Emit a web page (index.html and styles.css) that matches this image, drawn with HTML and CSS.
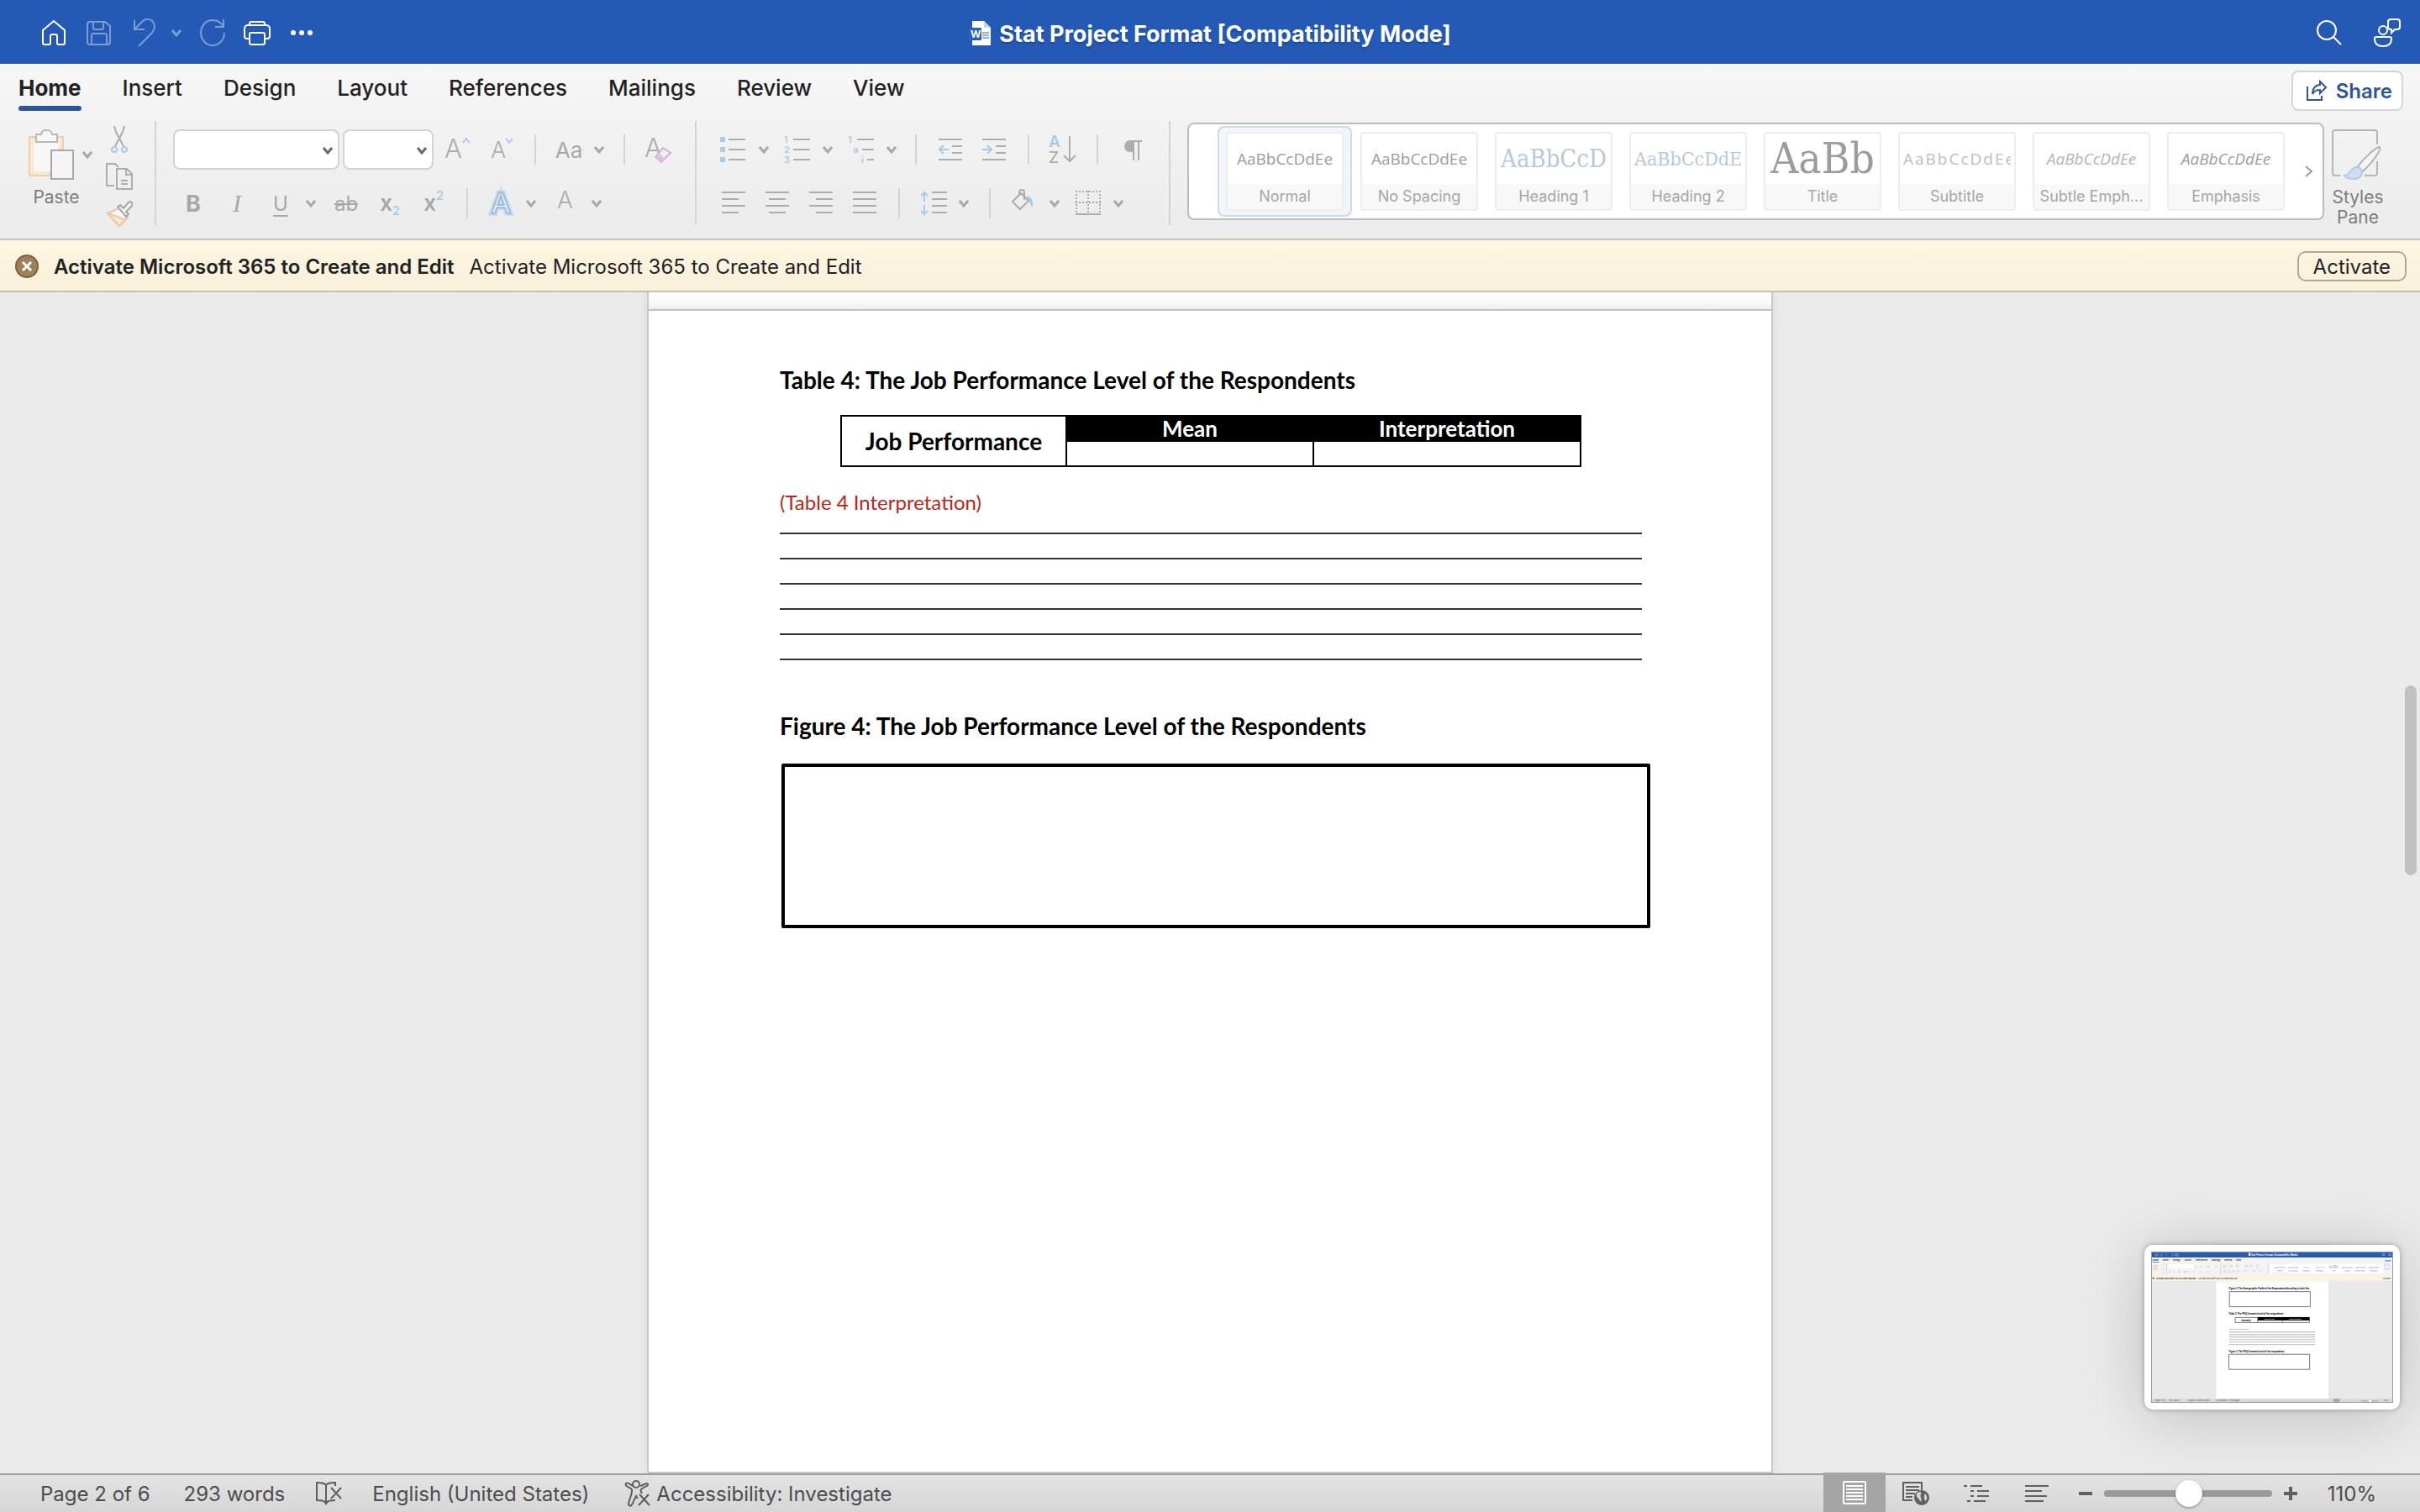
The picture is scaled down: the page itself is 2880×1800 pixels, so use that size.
FILE: index.html
```html
<!DOCTYPE html>
<html lang="en">
  <head>
    <meta charset="UTF-8" />
    <meta name="viewport" content="width=device-width, initial-scale=1.0" />
    <title>Stat Project Format</title>
    <link rel="stylesheet" href="styles.css">
  </head>
  <body>
    <!-- shared icons -->
    <svg class="defs" width="0" height="0" aria-hidden="true">
      <symbol id="chev" viewBox="0 0 12 10"><path d="M1 2l5 6 5-6" fill="none" stroke="currentColor" stroke-width="3"/></symbol>
    </svg>

    <header class="titlebar">
      <div class="quick">
        <button aria-label="Home"><svg width="32" height="32" viewBox="0 0 32 32"><path d="M3 13L16 2l13 11v15a2 2 0 0 1-2 2h-5a2 2 0 0 1-2-2v-8a2 2 0 0 0-2-2h-4a2 2 0 0 0-2 2v8a2 2 0 0 1-2 2H5a2 2 0 0 1-2-2z"/></svg></button>
        <button class="dim" aria-label="Save"><svg width="32" height="32" viewBox="0 0 32 32"><path d="M5 3h18l6 5v19a3 3 0 0 1-3 3H5a3 3 0 0 1-3-3V6a3 3 0 0 1 3-3zM9 3v7a2 2 0 0 0 2 2h8a2 2 0 0 0 2-2V3M7 30V19a2 2 0 0 1 2-2h14a2 2 0 0 1 2 2v11"/></svg></button>
        <button class="dim" aria-label="Undo"><svg width="32" height="34" viewBox="0 0 32 34"><path d="M4 2v11h12M4 13L14 3c5-4 10-2 12 1 3 4 2 9-1 13L9 33"/></svg></button>
        <button class="dim small" aria-label="Undo options"><svg width="12" height="10"><use href="#chev"/></svg></button>
        <button class="dim" aria-label="Redo"><svg width="32" height="34" viewBox="0 0 32 34"><path d="M30 1v9H20M30 10C27 4 22 2 16 2a14 15 0 1 0 15 15"/></svg></button>
        <button aria-label="Print"><svg width="32" height="32" viewBox="1 0 32 32"><path d="M8 7V5a2 2 0 0 1 2-2h14a2 2 0 0 1 2 2v2M8 23H5a3 3 0 0 1-3-3v-9a4 4 0 0 1 4-4h22a4 4 0 0 1 4 4v9a3 3 0 0 1-3 3h-3M8 18a2 2 0 0 1 2-2h14a2 2 0 0 1 2 2v10a2 2 0 0 1-2 2H10a2 2 0 0 1-2-2z"/></svg></button>
        <button aria-label="More"><svg width="30" height="8" viewBox="0 0 30 8"><g class="fill"><circle cx="5" cy="4" r="3"/><circle cx="15" cy="4" r="3"/><circle cx="25" cy="4" r="3"/></g></svg></button>
      </div>
      <h1 class="filename">
        <svg width="26" height="30" viewBox="0 0 26 30"><path class="sheet" d="M4 0h14l8 8v21H4z"/><path d="M18 0v8h8z" fill="#c9d6ea"/><path d="M16 14h8M16 17h8M16 20h8" stroke="#2b62b8" stroke-width="1"/><rect y="8" width="15" height="15" rx="1" fill="#2a63bd"/><text x="2" y="20" font-size="12" font-weight="700" fill="#fff">W</text></svg>
        Stat Project Format [Compatibility Mode]
      </h1>
      <div class="quick-right">
        <button aria-label="Search"><svg width="32" height="32" viewBox="0 0 32 32"><circle cx="13" cy="13" r="11"/><path d="M21 21l9 9"/></svg></button>
        <button aria-label="Comments"><svg width="34" height="34" viewBox="0 0 34 34"><circle cx="12" cy="14" r="5"/><path d="M4 22h16a2 2 0 0 1 2 2c0 6-4 9-10 9S2 30 2 24a2 2 0 0 1 2-2zM21 1h8a3 3 0 0 1 3 3v6a3 3 0 0 1-3 3h-3l-4 4v-4h-1a3 3 0 0 1-3-3V4a3 3 0 0 1 3-3z"/></svg></button>
      </div>
    </header>

    <div class="ribbon">
      <div class="tab-row">
        <nav class="tabs">
          <a class="on" href="#">Home</a>
          <a href="#">Insert</a>
          <a href="#">Design</a>
          <a href="#">Layout</a>
          <a href="#">References</a>
          <a href="#">Mailings</a>
          <a href="#">Review</a>
          <a href="#">View</a>
        </nav>
        <button class="share"><svg width="26" height="26" viewBox="0 0 26 26"><path d="M2 8v16h17v-5M8 17c0-7 4-11 9-11V2l7 7-7 7v-4c-4 0-7 1-9 5z" fill="none" stroke="currentColor" stroke-width="2"/></svg>Share</button>
      </div>

      <div class="tools">
        <section class="clipboard">
          <div class="paste">
            <div class="paste-top">
              <button aria-label="Paste"><svg width="56" height="60" viewBox="0 0 56 60"><path d="M1 9h40v15H26v31H1z" fill="#f7ead0" stroke="#f0cdb0" stroke-width="2"/><path d="M6 14h30v12H26v24H6z" fill="#f7f7f7"/><path d="M9 6h6c0-7 13-7 13 0h6v9H9z" fill="#f7f7f7" stroke="#b9b9b9" stroke-width="2"/><path d="M27 25h26v34H27z" fill="#f5f5f5" stroke="#a9a9a9" stroke-width="2"/></svg></button>
              <button class="drop" aria-label="Paste options"><svg width="12" height="10"><use href="#chev"/></svg></button>
            </div>
            <span class="caption">Paste</span>
          </div>
          <div class="clip-col">
            <button aria-label="Cut"><svg width="32" height="32" viewBox="0 0 32 32" fill="none"><path d="M10 0l2 7 9 17M22 0l-2 7-9 17" stroke="#adadad" stroke-width="2"/><g stroke="#a9cbe5" stroke-width="2"><circle cx="10" cy="28" r="3"/><circle cx="22" cy="28" r="3"/></g></svg></button>
            <button aria-label="Copy"><svg width="32" height="32" viewBox="0 0 32 32" fill="none" stroke="#adadad" stroke-width="2"><path d="M10 27H1V1h10l4 4"/><path d="M13 7h12l6 6v18H13zM24 7v7h7M18 21h8M18 25h8"/></svg></button>
            <button aria-label="Format painter"><svg width="32" height="32" viewBox="0 0 32 32" fill="none" stroke-width="2"><path d="M2 16l13-6 11 11-10 10z" fill="#f7f7f7" stroke="#f0c5a4"/><path d="M2 16c8 2 15 5 21 8l-7 7z" fill="#f7ead0" stroke="#f0c5a4"/><path d="M14 8l3-2 4 4 6-7c2-2 6 1 4 4l-7 7 3 3-3 3z" fill="#f5f5f5" stroke="#a5a5a5"/></svg></button>
          </div>
        </section>

        <section class="font-group">
          <div class="row">
            <div class="boxes">
              <span class="pick wide"><select aria-label="Font name"><option></option></select><svg width="12" height="10"><use href="#chev"/></svg></span>
              <span class="pick"><select aria-label="Font size"><option></option></select><svg width="12" height="10"><use href="#chev"/></svg></span>
            </div>
            <button class="tool" aria-label="Grow font"><svg width="32" height="32" viewBox="0 0 32 32"><text x="0" y="26" font-size="31">A</text><path class="blue-line" d="M22 8l4-5 4 5"/></svg></button>
            <button class="tool" aria-label="Shrink font"><svg width="32" height="32" viewBox="0 0 32 32"><text x="3" y="26" font-size="27">A</text><path class="blue-line" d="M21 3l4 5 4-5"/></svg></button>
            <i class="bar"></i>
            <span class="split"><button class="tool case">Aa</button><button class="drop" aria-label="Case options"><svg width="12" height="10"><use href="#chev"/></svg></button></span>
            <i class="bar"></i>
            <button class="tool" aria-label="Clear formatting"><svg width="32" height="34" viewBox="0 0 32 34"><text x="0" y="26" font-size="31">A</text><path d="M22 15l9 6-11 11-7-6z" fill="#f3eef5" stroke="#cfaed6" stroke-width="2"/><path d="M17 21l7 7-4 4-7-6z" fill="#dcc3e2"/></svg></button>
          </div>
          <div class="row second">
            <button class="tool bold">B</button>
            <button class="tool italic">I</button>
            <span class="split"><button class="tool under">U</button><button class="drop" aria-label="Underline options"><svg width="12" height="10"><use href="#chev"/></svg></button></span>
            <button class="tool strike">ab</button>
            <button class="tool script">x<sub>2</sub></button>
            <button class="tool script">x<sup>2</sup></button>
            <i class="bar"></i>
            <span class="split"><button class="tool" aria-label="Text effects"><svg width="32" height="32" viewBox="0 0 32 32"><text x="4" y="28" font-size="34" class="halo">A</text><text x="4" y="28" font-size="34" class="glow">A</text></svg></button><button class="drop" aria-label="Effect options"><svg width="12" height="10"><use href="#chev"/></svg></button></span>
            <span class="split"><button class="tool" aria-label="Font color"><svg width="32" height="32" viewBox="0 0 32 32"><text x="5" y="22" font-size="28">A</text></svg></button><button class="drop" aria-label="Color options"><svg width="12" height="10"><use href="#chev"/></svg></button></span>
          </div>
        </section>

        <section class="para-group">
          <div class="row">
            <div class="lists">
              <span class="split"><button class="tool" aria-label="Bullets"><svg width="32" height="32" viewBox="0 0 32 32"><path class="blue" d="M0 1h6v6H0zM0 13h6v6H0zM0 25h6v6H0z"/><path class="line" d="M10 4h20M10 16h20M10 28h20"/></svg></button><button class="drop" aria-label="Bullet options"><svg width="12" height="10"><use href="#chev"/></svg></button></span>
              <span class="split"><button class="tool" aria-label="Numbering"><svg width="32" height="32" viewBox="0 0 32 32"><g class="blue" font-size="11"><text x="0" y="8">1</text><text x="0" y="20">2</text><text x="0" y="32">3</text></g><path class="line" d="M11 4h20M11 16h20M11 28h20"/></svg></button><button class="drop" aria-label="Numbering options"><svg width="12" height="10"><use href="#chev"/></svg></button></span>
              <span class="split"><button class="tool" aria-label="Multilevel list"><svg width="32" height="32" viewBox="0 0 32 32"><g class="blue" font-size="11"><text x="0" y="8">1</text><text x="6" y="20">a</text><text x="16" y="32">i</text></g><path class="line" d="M11 4h20M17 16h14M23 28h8"/></svg></button><button class="drop" aria-label="Multilevel options"><svg width="12" height="10"><use href="#chev"/></svg></button></span>
            </div>
            <i class="bar"></i>
            <button class="tool" aria-label="Decrease indent"><svg width="32" height="32" viewBox="0 0 32 32"><path class="line" d="M2 4h28M18 12h12M18 20h12M2 28h28"/><path class="blue-line" d="M14 16H3M8 11l-5 5 5 5"/></svg></button>
            <button class="tool" aria-label="Increase indent"><svg width="32" height="32" viewBox="0 0 32 32"><path class="line" d="M2 4h28M18 12h12M18 20h12M2 28h28"/><path class="blue-line" d="M2 16h11M8 11l5 5-5 5"/></svg></button>
            <i class="bar"></i>
            <button class="tool" aria-label="Sort"><svg width="34" height="34" viewBox="0 0 34 34"><text class="blue" x="0" y="14" font-size="19">A</text><text class="zed" x="0" y="33" font-size="19">Z</text><path class="line" d="M25 1v30M18 24l7 7 7-7"/></svg></button>
            <i class="bar"></i>
            <button class="tool" aria-label="Show marks"><svg width="32" height="32" viewBox="0 0 32 32"><path d="M14 5h14v2h-3v22h-2V7h-4v22h-2V19h-3c-9 0-9-14 0-14z" fill="#adadad"/></svg></button>
          </div>
          <div class="row">
            <button class="tool" aria-label="Align left"><svg width="32" height="32" viewBox="0 0 32 32"><path class="line" d="M2 3h28M2 11h20M2 19h28M2 27h20"/></svg></button>
            <button class="tool" aria-label="Center"><svg width="32" height="32" viewBox="0 0 32 32"><path class="line" d="M2 3h28M6 11h20M2 19h28M6 27h20"/></svg></button>
            <button class="tool" aria-label="Align right"><svg width="32" height="32" viewBox="0 0 32 32"><path class="line" d="M2 3h28M10 11h20M2 19h28M10 27h20"/></svg></button>
            <button class="tool" aria-label="Justify"><svg width="32" height="32" viewBox="0 0 32 32"><path class="line" d="M2 3h28M2 11h28M2 19h28M2 27h28"/></svg></button>
            <i class="bar"></i>
            <span class="split"><button class="tool" aria-label="Line spacing"><svg width="32" height="32" viewBox="0 0 32 32"><path class="blue-line" d="M5 14V3M1 7l4-4 4 4M5 18v11M1 25l4 4 4-4"/><path class="line" d="M14 3h18M14 11h18M14 19h18M14 27h18"/></svg></button><button class="drop" aria-label="Spacing options"><svg width="12" height="10"><use href="#chev"/></svg></button></span>
            <i class="bar"></i>
            <div class="lists">
              <span class="split"><button class="tool" aria-label="Shading"><svg width="32" height="32" viewBox="0 0 32 32"><path class="line" d="M2 14L12 4l9 9-10 10zM10 6V3c0-4 6-4 6 0v9"/><path class="blue" d="M18 8c6-1 9 4 8 13-3-3-3-7-8-13z"/></svg></button><button class="drop" aria-label="Shading options"><svg width="12" height="10"><use href="#chev"/></svg></button></span>
              <span class="split"><button class="tool" aria-label="Borders"><svg width="32" height="32" viewBox="0 0 32 32"><path class="line dots" d="M1 2h30M1 15h30M2 1v26M16 1v26M30 1v26"/><path class="line" d="M1 29h30"/></svg></button><button class="drop" aria-label="Border options"><svg width="12" height="10"><use href="#chev"/></svg></button></span>
            </div>
          </div>
        </section>

        <section class="gallery">
          <button class="style on"><span class="card"><span class="sample">AaBbCcDdEe</span><span class="name">Normal</span></span></button>
          <button class="style"><span class="card"><span class="sample">AaBbCcDdEe</span><span class="name">No Spacing</span></span></button>
          <button class="style"><span class="card"><span class="sample h1">AaBbCcD</span><span class="name">Heading 1</span></span></button>
          <button class="style"><span class="card"><span class="sample h2">AaBbCcDdE</span><span class="name">Heading 2</span></span></button>
          <button class="style"><span class="card"><span class="sample title">AaBb</span><span class="name">Title</span></span></button>
          <button class="style"><span class="card"><span class="sample subtitle">AaBbCcDdEe</span><span class="name">Subtitle</span></span></button>
          <button class="style"><span class="card"><span class="sample subtle">AaBbCcDdEe</span><span class="name">Subtle Emph...</span></span></button>
          <button class="style"><span class="card"><span class="sample em">AaBbCcDdEe</span><span class="name">Emphasis</span></span></button>
          <button class="more" aria-label="More styles"><svg width="12" height="14" viewBox="0 0 12 14"><path d="M2 1l7 6-7 6" fill="none" stroke="#9c9c9c" stroke-width="2"/></svg></button>
        </section>

        <button class="styles-pane">
          <svg width="64" height="62" viewBox="0 0 64 62"><path d="M11 55H5a3 3 0 0 1-3-3V4a3 3 0 0 1 3-3h47a3 3 0 0 1 3 3v14M55 38v14a3 3 0 0 1-3 3H40" fill="none" stroke="#b5b5b5" stroke-width="2"/><path d="M32 44C40 34 52 22 58 21c3 3-10 20-20 29z" fill="#f5f5f5" stroke="#b0b0b0" stroke-width="2"/><path d="M16 55c7 0 7-10 15-10 9 1 8 14-4 14-5 0-9-1-11-4z" fill="#cfdfee" stroke="#b0cbe4" stroke-width="2"/></svg>
          <span class="caption">Styles<br>Pane</span>
        </button>
      </div>
    </div>

    <div class="message">
      <button class="close" aria-label="Close"><svg width="28" height="28" viewBox="0 0 28 28"><circle cx="14" cy="14" r="13" fill="#a08059" stroke="#7c6344" stroke-width="2"/><path d="M9 9l10 10M19 9L9 19" stroke="#fff" stroke-width="3"/></svg></button>
      <strong>Activate Microsoft 365 to Create and Edit</strong>
      <span>Activate Microsoft 365 to Create and Edit</span>
      <button class="activate">Activate</button>
    </div>

    <main class="workspace">
      <div class="page-end"></div>
      <article class="page">
        <h2>Table 4: The Job Performance Level of the Respondents</h2>
        <table class="result">
          <tr>
            <th class="label" rowspan="2">Job Performance</th>
            <th class="head mean">Mean</th>
            <th class="head">Interpretation</th>
          </tr>
          <tr>
            <td></td>
            <td></td>
          </tr>
        </table>
        <p class="note">(Table 4 Interpretation)</p>
        <div class="blanks">
          <hr><hr><hr><hr><hr><hr>
        </div>
        <h2>Figure 4: The Job Performance Level of the Respondents</h2>
        <div class="figure"></div>
      </article>

      <div class="scroll"></div>

      <!-- floating preview of the first page -->
      <div class="preview">
        <svg viewBox="0 0 2880 1800">
          <rect width="2880" height="1800" fill="#e9e9e9"/>
          <rect width="2880" height="70" fill="#245ab5"/>
          <text x="1190" y="48" font-size="28" font-weight="700" fill="#fff">Stat Project Format [Compatibility Mode]</text>
          <path d="M1160 15h22v36h-22z" fill="#fff"/>
          <path d="M50 50V34l13-12 13 12v16zM290 26h32v24h-32zM2756 24h22v22h-22zM2830 24h22v22h-22z" fill="none" stroke="#c8d8f0" stroke-width="5"/>
          <path d="M104 26h26v24h-26zM160 30h26v20M236 26h28v24h-28" fill="none" stroke="#7c9fd6" stroke-width="5"/>
          <rect y="70" width="2880" height="220" fill="#f3f3f3"/>
          <g font-size="26" font-weight="600" fill="#222"><text x="16" y="112">Home</text><text x="138" y="112">Insert</text><text x="260" y="112">Design</text><text x="396" y="112">Layout</text><text x="530" y="112">References</text><text x="720" y="112">Mailings</text><text x="872" y="112">Review</text><text x="1008" y="112">View</text><text x="2780" y="118" fill="#2f5596">Share</text></g>
          <rect x="20" y="122" width="74" height="7" fill="#2f5596"/>
          <path d="M206 150h190v50H206zM408 150h106v50H408zM1414 144h1350v116H1414z" fill="#fff"/>
          <path d="M30 160h44v56H30z" fill="#f3e4cd" stroke="#c9c9c9" stroke-width="5"/>
          <g fill="none" stroke="#bdbdbd" stroke-width="5"><path d="M858 164h34M858 178h34M858 190h34M934 164h34M934 178h34M1010 164h34M1010 178h34M1118 164h34M1118 178h34M1170 164h34M1170 178h34M1250 164h30M1250 190h30M860 228h30M860 242h30M912 228h30M912 242h30M964 228h30M964 242h30M1016 228h30M1016 242h30M1098 228h40M1204 228h40M1278 228h40M130 150h26M130 204h26M130 246h26"/><path d="M185 140v130M828 140v130M1392 140v130"/></g>
          <g font-size="26" fill="#a5a5a5"><text x="524" y="188">A</text><text x="580" y="188">A</text><text x="660" y="188">Aa</text><text x="768" y="188">A</text><text x="216" y="250">B</text><text x="272" y="250">I</text><text x="320" y="250">U</text><text x="394" y="250">ab</text><text x="450" y="250">x</text><text x="504" y="250">x</text><text x="580" y="250" fill="#7fa9dc">A</text><text x="664" y="250">A</text></g>
          <g font-size="20" fill="#a0a0a0" text-anchor="middle"><rect x="1452" y="150" width="152" height="104" fill="none" stroke="#d3dfee" stroke-width="4"/><text x="1530" y="196">AaBbCcDdEe</text><text x="1690" y="196">AaBbCcDdEe</text><text x="1850" y="196" fill="#b9c7dd">AaBbCcD</text><text x="2010" y="196" fill="#b9c7dd">AaBbCcDdE</text><text x="2170" y="202" font-size="44">AaBb</text><text x="2330" y="196">AaBbCcDdEe</text><text x="2490" y="196">AaBbCcDdEe</text><text x="2650" y="196">AaBbCcDdEe</text><text x="1530" y="240">Normal</text><text x="1690" y="240">No Spacing</text><text x="1850" y="240">Heading 1</text><text x="2010" y="240">Heading 2</text><text x="2170" y="240">Title</text><text x="2330" y="240">Subtitle</text><text x="2490" y="240">Subtle Emph...</text><text x="2650" y="240">Emphasis</text></g>
          <path d="M2780 154h54v54h-54z" fill="#eef3f8" stroke="#bdbdbd" stroke-width="5"/>
          <rect y="290" width="2880" height="54" fill="#fcf3de"/>
          <circle cx="28" cy="317" r="14" fill="#a08059"/>
          <g font-size="24" fill="#222"><text x="60" y="326" font-weight="600">Activate Microsoft 365 to Create and Edit</text><text x="560" y="326">Activate Microsoft 365 to Create and Edit</text><text x="2756" y="326">Activate</text></g>
          <rect x="773" y="346" width="1337" height="1410" fill="#fff"/>
          <path d="M773 360h1337" stroke="#d8d8d8" stroke-width="5"/>
          <g class="mini-doc" font-size="28" font-weight="900"><text x="926" y="454">Figure 2. The Demographic Profile of the Respondents According to their Sex</text><text x="926" y="752">Table 3. The PSQI Insomnia level of the respondents.</text><text x="926" y="1198">Figure 3. The PSQI Insomnia level of the respondents.</text><text x="1074" y="828">Insomnia</text><text x="926" y="934" font-size="24" font-weight="400" fill="#d8453c">(Table 3 Interpretation)</text></g>
          <path d="M932 476h962v180H932zM926 1222h960v180H926zM1000 784h884v60h-884z" fill="none" stroke="#444" stroke-width="7"/>
          <path d="M1266 780h618v40h-618z"/><path d="M1266 820v24M1562 820v24" stroke="#444" stroke-width="6"/>
          <g class="mini-doc" font-size="24" font-weight="700" fill="#fff"><text x="1346" y="812">Mean Score</text><text x="1640" y="812">Interpretation</text></g>
          <path d="M926 958h1026M926 988h1026M926 1018h1026M926 1046h1026M926 1076h1026M926 1106h1026" stroke="#c8c8c8" stroke-width="14"/>
          <rect y="1752" width="2880" height="48" fill="#d8d8d8"/>
          <rect x="2170" y="1752" width="74" height="48" fill="#a5a5a5"/>
          <g font-size="24" fill="#555"><text x="46" y="1784">Page 1 of 6</text><text x="214" y="1784">293 words</text><text x="440" y="1784">English (United States)</text><text x="776" y="1784">Accessibility: Investigate</text><text x="2768" y="1784">110%</text></g>
          <path d="M2500 1778h206" stroke="#999" stroke-width="8"/><circle cx="2606" cy="1778" r="16" fill="#fff"/>
        </svg>
      </div>
    </main>

    <footer class="status">
      <span class="pages">Page 2 of 6</span>
      <span class="words">293 words</span>
      <button class="proof" aria-label="Proofing"><svg width="32" height="30" viewBox="0 0 32 30"><path d="M13 5c-2-3-6-3-11-3v21c5 0 9 0 11 4 2-4 6-4 11-4M13 5c2-3 6-3 11-3v4M13 5v21M19 8l12 13M31 8L19 21" fill="none" stroke="#5e5e5e" stroke-width="2"/></svg></button>
      <span class="lang">English (United States)</span>
      <button class="access"><svg width="32" height="32" viewBox="0 0 32 32"><path d="M9 11C5 8 0 7 2 4c2-2 5 2 9 3M19 7c4-1 8-5 9-2 1 2-5 3-8 6-1 2 0 3 1 5M9 11c1 5-4 13-4 18 2 4 5 0 6-4l3-6 2 3M18 17l12 13M29 17L17 30" fill="none" stroke="#5e5e5e" stroke-width="2"/><circle cx="14" cy="5" r="4" fill="none" stroke="#5e5e5e" stroke-width="2"/></svg>Accessibility: Investigate</button>
      <div class="views">
        <button class="view on" aria-label="Print layout"><svg width="28" height="28" viewBox="0 0 28 28"><rect x="1" y="1" width="26" height="26" rx="1" fill="none" stroke="#fff" stroke-width="2"/><path d="M4 6h20M4 10h20M4 14h20M4 18h20M4 22h20" stroke="#fff" stroke-width="2"/></svg></button>
        <button class="view" aria-label="Web layout"><svg width="32" height="28" viewBox="0 0 32 28"><path d="M12 22H1V1h22v9M4 6h16M4 10h16M4 14h11M4 18h8" fill="none" stroke="#606060" stroke-width="2"/><circle cx="23" cy="19" r="9" fill="#606060"/><path d="M17 14c3-3 7-2 5 1-2 2 2 4 0 9-2-2-2-4-5-6zM27 14c3 3 3 7 0 9-1-3-2-6 0-9z" fill="#d4d4d4"/></svg></button>
        <button class="view" aria-label="Outline"><svg width="32" height="24" viewBox="0 0 32 24"><path d="M1 3h4M9 3h14M9 9h4M17 9h14M9 15h4M17 15h14M5 21h4M13 21h14" stroke="#606060" stroke-width="2"/></svg></button>
        <button class="view" aria-label="Draft"><svg width="30" height="24" viewBox="0 0 30 24"><path d="M1 3h28M1 9h20M1 15h26M1 21h22" stroke="#606060" stroke-width="2"/></svg></button>
      </div>
      <div class="zoom">
        <button aria-label="Zoom out"><svg width="16" height="16" viewBox="0 0 16 16"><path d="M0 8h16" stroke="#606060" stroke-width="4"/></svg></button>
        <input type="range" min="0" max="100" value="51" aria-label="Zoom">
        <button aria-label="Zoom in"><svg width="16" height="16" viewBox="0 0 16 16"><path d="M0 8h16M8 0v16" stroke="#606060" stroke-width="4"/></svg></button>
        <button class="percent">110%</button>
      </div>
    </footer>
  </body>
</html>
```
FILE: styles.css
```css
* {
  margin: 0;
  padding: 0;
  box-sizing: border-box;
}
body {
  height: 100vh;
  display: flex;
  flex-direction: column;
  overflow: hidden;
  background: #ebebeb;
  font-family: Inter, "Liberation Sans", sans-serif;
  font-size: 24px;
  color: #222;
}
button {
  display: flex;
  align-items: center;
  justify-content: center;
  background: none;
  border: none;
  color: inherit;
  font: inherit;
}
svg {
  display: block;
  flex: none;
}
.defs {
  position: absolute;
}

/* title bar */
.titlebar {
  height: 76px;
  padding: 2px 22px 0;
  display: grid;
  grid-template-columns: 1fr auto 1fr;
  align-items: center;
  background: #245ab5;
  color: #fff;
}
.quick,
.quick-right {
  display: flex;
  align-items: center;
  gap: 22px;
}
.quick {
  padding-left: 26px;
}
.quick-right {
  justify-content: flex-end;
  gap: 36px;
}
.quick svg path,
.quick-right svg path,
.quick-right circle {
  fill: none;
  stroke: currentColor;
  stroke-width: 2;
}
.quick .fill {
  fill: #fff;
}
.dim {
  color: #7b9dd4;
}
.quick .small {
  margin: 0 -2px 0 -6px;
}
.filename {
  display: flex;
  align-items: center;
  gap: 10px;
  padding-top: 2px;
  font-size: 27px;
  font-weight: 700;
  text-shadow: 0 2px 2px rgba(0, 0, 0, 0.2);
}
.filename .sheet {
  fill: #fff;
}

/* ribbon */
.ribbon {
  height: 210px;
  background: linear-gradient(#f7f7f7, #f3f3f3 30%, #ebebeb);
  border-bottom: 2px solid #c4c4c4;
}
.tab-row {
  height: 68px;
  padding: 8px 20px 0 22px;
  display: flex;
  justify-content: space-between;
  align-items: flex-start;
}
.tabs {
  display: flex;
  gap: 49px;
}
.tabs a {
  color: #222;
  font-size: 26px;
  font-weight: 500;
  line-height: 42px;
  text-decoration: none;
}
.tabs .on {
  font-weight: 700;
}
.tabs .on::after {
  content: "";
  display: block;
  height: 6px;
  border-radius: 3px;
  background: #2f5596;
}
.share {
  height: 48px;
  padding: 0 11px 0 15px;
  gap: 10px;
  border: 2px solid #d6d6d6;
  border-radius: 8px;
  background: #fff;
  color: #2f5596;
  font-weight: 600;
}
.tools {
  display: flex;
  align-items: flex-start;
  padding-left: 34px;
  color: #a8a8a8;
}
.clipboard,
.font-group,
.para-group {
  height: 124px;
  border-right: 2px solid #d4d4d4;
}
.clipboard {
  display: flex;
  gap: 16px;
  padding-right: 26px;
}
.paste {
  padding-top: 10px;
}
.paste-top {
  display: flex;
  align-items: center;
  gap: 8px;
}
.caption {
  display: block;
  color: #7d7d7d;
  font-size: 21px;
  line-height: 24px;
  text-align: center;
}
.paste .caption {
  width: 66px;
  margin-top: 9px;
}
.clip-col {
  display: flex;
  flex-direction: column;
  gap: 12px;
  padding-top: 6px;
}
.font-group {
  padding: 10px 28px 0 20px;
}
.para-group {
  padding: 10px 28px 0;
}
.row {
  height: 48px;
  margin-bottom: 16px;
  display: flex;
  align-items: center;
  gap: 20px;
}
.row.second {
  padding-left: 8px;
}
.boxes {
  display: flex;
  gap: 4px;
  margin-right: -7px;
}
.pick {
  position: relative;
  width: 108px;
  height: 48px;
  color: #6b6b6b;
}
.pick.wide {
  width: 198px;
}
.pick select {
  width: 100%;
  height: 100%;
  appearance: none;
  border: 2px solid #d3d3d3;
  border-radius: 8px;
  background: #fff;
}
.pick svg {
  position: absolute;
  right: 8px;
  top: 20px;
}
.tool {
  width: 32px;
  height: 32px;
}
.tool svg {
  overflow: visible;
}
.tool text {
  fill: #adadad;
  font-weight: 300;
}
.tool .zed {
  font-weight: 500;
}
.tool .blue,
.tool .blue text {
  fill: #a9cbe5;
  font-weight: 600;
}
.line,
.blue-line {
  fill: none;
  stroke: #adadad;
  stroke-width: 2;
}
.blue-line {
  stroke: #a9cbe5;
}
.dots {
  stroke-dasharray: 2 2;
}
.tool .halo {
  fill: none;
  font-weight: 500;
  stroke: #c9dcee;
  stroke-width: 6;
}
.tool .glow {
  fill: #f5f8fb;
  font-weight: 500;
  stroke: #9dbbdc;
  stroke-width: 2;
}
.split {
  display: flex;
  align-items: center;
  gap: 14px;
}
.drop {
  color: #a8a8a8;
}
.bar {
  width: 2px;
  height: 36px;
  margin: 0 3px;
  background: #d4d4d4;
}
.para-group .bar {
  margin: 0 4px;
}
.case {
  font-size: 26px;
}
.bold {
  font-size: 27px;
  font-weight: 700;
}
.script {
  align-items: stretch;
  font-size: 26px;
  font-weight: 600;
  line-height: 32px;
}
.script sub,
.script sup {
  color: #a9cbe5;
  font-size: 14px;
  line-height: 14px;
}
.script sub {
  align-self: flex-end;
}
.script sup {
  align-self: flex-start;
}
.italic {
  font-family: "Liberation Serif", serif;
  font-size: 30px;
  font-style: italic;
}
.under {
  text-decoration: underline;
  text-decoration-thickness: 2px;
  text-underline-offset: 5px;
}
.strike {
  text-decoration: line-through;
  text-decoration-thickness: 2px;
}
.lists {
  display: flex;
  gap: 18px;
  margin-right: -2px;
}

/* style gallery */
.gallery {
  flex: 1;
  height: 116px;
  margin: 2px 0 0 20px;
  padding-left: 34px;
  display: flex;
  align-items: center;
  overflow: hidden;
  border: 2px solid #bcbcbc;
  border-radius: 8px;
  background: #fff;
}
.style {
  width: 160px;
  height: 108px;
  flex: none;
  padding: 6px 8px;
  border: 2px solid transparent;
  border-radius: 8px;
}
.style.on {
  border-color: #ccd9ea;
  background: #f2f6fa;
}
.card {
  width: 140px;
  height: 94px;
  display: flex;
  flex-direction: column;
  overflow: hidden;
  border: 2px solid #ededed;
  border-radius: 4px;
  background: #fff;
}
.sample {
  height: 60px;
  margin: 0 4px;
  overflow: hidden;
  color: #9c9c9c;
  font-family: "Open Sans", sans-serif;
  font-size: 19px;
  line-height: 60px;
  white-space: nowrap;
}
.name {
  flex: 1;
  background: #f8f8f8;
  color: #a6a6a6;
  font-size: 18px;
  line-height: 30px;
  white-space: nowrap;
}
.sample.h1,
.sample.h2 {
  color: #b9c7dd;
  font-family: "DejaVu Serif Condensed", "DejaVu Serif", serif;
  font-size: 29px;
}
.sample.h2 {
  font-size: 23px;
}
.sample.title {
  font-family: "DejaVu Serif Condensed", "DejaVu Serif", serif;
  font-size: 51px;
}
.sample.subtitle {
  color: #bdbdbd;
  letter-spacing: 2px;
}
.sample.subtle {
  color: #b5b5b5;
  font-style: italic;
}
.sample.em {
  font-style: italic;
}
.more {
  margin-left: 13px;
}
.styles-pane {
  width: 80px;
  margin-right: 34px;
  padding-top: 10px;
  flex-direction: column;
}
.styles-pane .caption {
  margin-top: 7px;
}

/* activation message */
.message {
  height: 62px;
  padding: 2px 16px 0 18px;
  display: flex;
  align-items: center;
  gap: 18px;
  border-bottom: 2px solid #c8c0ad;
  background: linear-gradient(#fff6e2, #f9f0dc);
}
.message strong {
  font-weight: 600;
}
.activate {
  height: 36px;
  margin-left: auto;
  padding: 0 17px;
  border: 2px solid #b0a896;
  border-radius: 10px;
}

/* document */
.workspace {
  flex: 1;
  min-height: 0;
  position: relative;
  display: flex;
  flex-direction: column;
  align-items: center;
  overflow: hidden;
}
.page-end,
.page {
  width: 1340px;
  max-width: 100%;
  border: 2px solid #c9c9c9;
  border-top: none;
  background: #fff;
  box-shadow: 0 0 12px rgba(0, 0, 0, 0.08);
}
.page-end {
  height: 22px;
  flex: none;
  background: linear-gradient(#fff, #f4f4f4);
}
.page {
  flex: 1;
  padding: 65px 144px 0 156px;
  color: #000;
  font-family: "Century Gothic", Lato, sans-serif;
}
.page h2 {
  font-size: 28px;
  font-weight: 700;
  line-height: 34px;
}
.result {
  width: 882px;
  margin: 25px 0 0 72px;
  border-collapse: collapse;
  table-layout: fixed;
}
.result th,
.result td {
  height: 30px;
  border: 2px solid #000;
}
.result th {
  font-size: 26px;
  line-height: 28px;
}
.result .label {
  width: 268px;
  font-size: 28px;
}
.result .mean {
  width: 294px;
}
.result .head {
  background: #000;
  color: #fff;
}
.note {
  margin-top: 24px;
  color: #b8261c;
  font-size: 24px;
  line-height: 36px;
}
.blanks {
  width: 1026px;
  padding-top: 18px;
}
.blanks hr {
  height: 2px;
  margin-bottom: 28px;
  border: none;
  background: #333;
}
.blanks + h2 {
  margin-top: 61px;
}
.figure {
  height: 196px;
  margin: 28px 0 0 2px;
  border: 4px solid #000;
  border-radius: 2px;
}
.scroll {
  position: absolute;
  right: 4px;
  top: 468px;
  width: 14px;
  height: 226px;
  border-radius: 7px;
  background: #c1c1c1;
}
.preview {
  position: absolute;
  right: 24px;
  bottom: 76px;
  width: 304px;
  padding: 8px;
  border-radius: 10px;
  background: #fff;
  box-shadow: 0 0 6px rgba(0, 0, 0, 0.3), 0 8px 80px rgba(0, 0, 0, 0.2);
}
.preview svg {
  width: 100%;
  outline: 1px solid #999;
  outline-offset: -1px;
}
.mini-doc {
  font-family: Lato, sans-serif;
}

/* status bar */
.status {
  height: 46px;
  padding: 0 52px 0 48px;
  display: flex;
  align-items: center;
  border-top: 2px solid #9c9c9c;
  background: linear-gradient(#e3e3e3, #d6d6d6);
  color: #4c4c4c;
  font-size: 24px;
}
.words {
  margin-left: 40px;
}
.proof {
  margin: 0 36px;
}
.access {
  margin-left: 42px;
  gap: 6px;
}
.views {
  margin-left: auto;
  display: flex;
  align-items: center;
}
.view {
  width: 72px;
  height: 46px;
}
.view.on {
  width: 74px;
  height: 48px;
  margin-top: -2px;
  background: #a5a5a5;
}
.zoom {
  display: flex;
  align-items: center;
  gap: 14px;
  margin-left: 14px;
}
.zoom input {
  width: 200px;
  height: 32px;
  appearance: none;
  background: none;
}
.zoom input::-webkit-slider-runnable-track {
  height: 8px;
  border-radius: 4px;
  background: #9a9a9a;
}
.zoom input::-webkit-slider-thumb {
  appearance: none;
  width: 32px;
  height: 32px;
  margin-top: -12px;
  border-radius: 50%;
  background: #fff;
  box-shadow: 0 1px 3px rgba(0, 0, 0, 0.4);
}
.percent {
  margin-left: 22px;
}
```
